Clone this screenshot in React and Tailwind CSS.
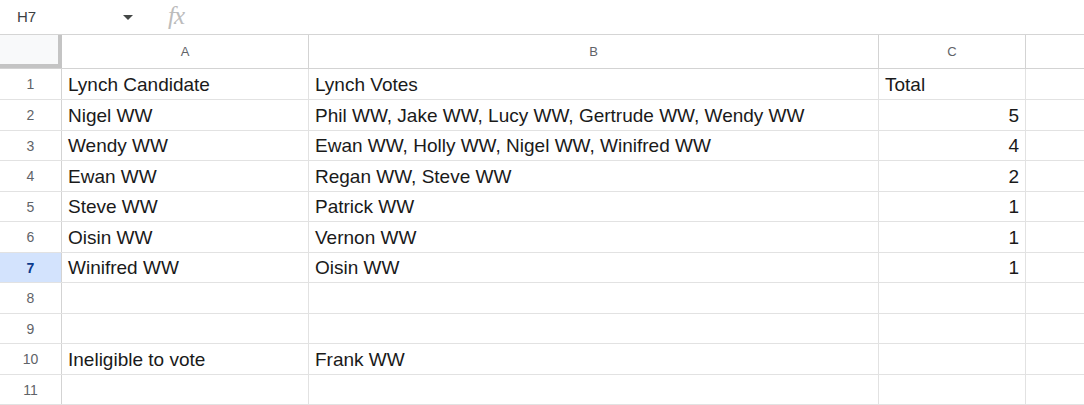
const rows = [
  { a: 'Lynch Candidate', b: 'Lynch Votes', c: 'Total', cLeft: true },
  { a: 'Nigel WW', b: 'Phil WW, Jake WW, Lucy WW, Gertrude WW, Wendy WW', c: '5' },
  { a: 'Wendy WW', b: 'Ewan WW, Holly WW, Nigel WW, Winifred WW', c: '4' },
  { a: 'Ewan WW', b: 'Regan WW, Steve WW', c: '2' },
  { a: 'Steve WW', b: 'Patrick WW', c: '1' },
  { a: 'Oisin WW', b: 'Vernon WW', c: '1' },
  { a: 'Winifred WW', b: 'Oisin WW', c: '1' },
  { a: '', b: '', c: '' },
  { a: '', b: '', c: '' },
  { a: 'Ineligible to vote', b: 'Frank WW', c: '' },
  { a: '', b: '', c: '' },
]

const heights = ['h-[31px]', 'h-[31px]', 'h-[30px]', 'h-[31px]', 'h-[30px]', 'h-[31px]', 'h-[30px]', 'h-[31px]', 'h-[30px]', 'h-[31px]', 'h-[30px]']

const cols = 'grid grid-cols-[62px_247px_570px_147px_1fr]'

export default function App() {
  return (
    <div className="w-[1084px] h-[405px] overflow-hidden bg-white font-['Liberation_Sans',Arial,sans-serif]">

      {/* formula bar */}
      <div className="h-[35px] border-b border-[#d5d5d5] flex items-center">
        <span className="ml-[17px] text-[15px] text-[#3c4043] w-[100px]">H7</span>
        <svg width="12" height="7" viewBox="0 0 12 7" className="ml-[5px] mt-[1px]">
          <path d="M1 1h10L6 6z" fill="#444746" />
        </svg>
        <span className="ml-[34px] -mt-[3px] text-[25px] italic text-[#bcbcbc] font-['Liberation_Serif',serif] tracking-[-1px]">fx</span>
      </div>

      {/* column header */}
      <div className={`${cols} h-[34px] border-b border-[#d3d3d3] text-[13px] text-[#5f6368]`}>
        <div className="bg-[#f8f9fa] border-r-4 border-b-4 border-[#c4c4c4]" />
        <div className="border-r border-[#d3d3d3] flex items-center justify-center">A</div>
        <div className="border-r border-[#d3d3d3] flex items-center justify-center">B</div>
        <div className="border-r border-[#d3d3d3] flex items-center justify-center">C</div>
        <div />
      </div>

      {rows.map((r, i) => {
        const selected = i === 6
        return (
          <div key={i} className={`${cols} ${heights[i]} border-b border-[#e2e2e2]`}>
            <div
              className={`border-r border-[#d3d3d3] flex items-center justify-center pt-[1px] text-[14px] ${
                selected ? 'bg-[#d3e3fd] text-[#0b3a8c] font-bold' : 'text-[#5f6368]'
              }`}
            >
              {i + 1}
            </div>
            <div className="border-r border-[#e2e2e2] flex items-end pl-[6px] text-[19px] text-[#1a1a1a] whitespace-nowrap">
              {r.a}
            </div>
            <div className="border-r border-[#e2e2e2] flex items-end pl-[6px] text-[19px] text-[#1a1a1a] whitespace-nowrap">
              {r.b}
            </div>
            <div
              className={`border-r border-[#e2e2e2] flex items-end text-[19px] text-[#1a1a1a] ${
                r.cLeft ? 'pl-[6px]' : 'justify-end pr-[6px]'
              }`}
            >
              {r.c}
            </div>
            <div />
          </div>
        )
      })}
    </div>
  )
}
